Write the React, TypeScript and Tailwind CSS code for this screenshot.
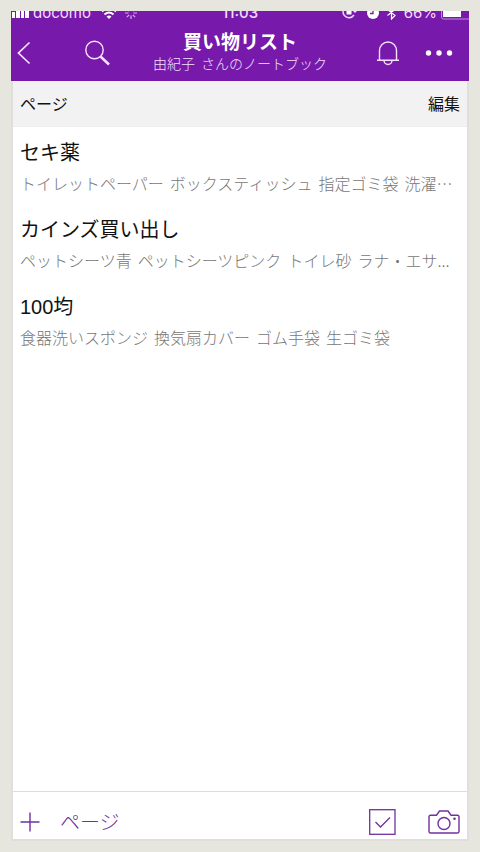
import React from "react";

type Page = { title: string; items: string[] };

const pages: Page[] = [
  {
    title: "セキ薬",
    items: ["トイレットペーパー", "ボックスティッシュ", "指定ゴミ袋", "洗濯…"],
  },
  {
    title: "カインズ買い出し",
    items: ["ペットシーツ青", "ペットシーツピンク", "トイレ砂", "ラナ・エサ..."],
  },
  {
    title: "100均",
    items: ["食器洗いスポンジ", "換気扇カバー", "ゴム手袋", "生ゴミ袋"],
  },
];

function StatusBar() {
  return (
    <div className="flex h-[9px] items-end font-['Inter','Liberation_Sans',sans-serif] text-[15px] leading-[15px] text-[#f3dcff]">
      <div className="flex flex-1 items-end">
        <svg className="mb-0.5" width="18" height="12" viewBox="0 0 18 12" fill="#fff">
          <rect x="1" y="6" width="3" height="6" />
          <rect x="5" y="4" width="4" height="8" />
          <rect x="10" y="2" width="3" height="10" />
          <rect x="14" y="0" width="4" height="12" />
        </svg>
        <span className="ml-1">docomo</span>
        <svg className="mb-px ml-2.5" width="16" height="12" viewBox="0 0 16 12" fill="none" stroke="#fff" strokeWidth="2">
          <path d="M1 4.500Q8-1.500 15 4.500M3.500 7.500Q8 3.500 12.500 7.500" />
          <path d="M5.500 9.500Q8 7.500 10.500 9.500L8 12Z" fill="#fff" stroke="none" />
        </svg>
        <svg className="mb-px ml-2" width="12" height="12" viewBox="0 0 12 12" fill="none" stroke="#d9b0ee" strokeWidth="1.200">
          <path d="M6 0v3.500M6 8.500V12M0 6h3.500M8.500 6H12M1.800 1.800l2.400 2.400M7.800 7.800l2.400 2.400M10.200 1.800L7.800 4.200M4.200 7.800l-2.400 2.400" />
        </svg>
      </div>
      <span className="font-medium">11:03</span>
      <div className="flex flex-1 items-end justify-end">
        <svg className="mb-px" width="15" height="14" viewBox="0 0 15 14" fill="none" stroke="#f3dcff" strokeWidth="1.500">
          <path d="M12 10A6 6 0 1 1 13 6M11 5l2 2 2-2" />
          <rect x="4.500" y="5.500" width="5" height="4" fill="#fff" stroke="none" />
        </svg>
        <svg className="mb-px ml-2.5" width="12" height="12" viewBox="0 0 12 12">
          <circle cx="6" cy="6" r="6" fill="#fff" />
          <path d="M6 2v4.500H3" fill="none" stroke="#7719aa" strokeWidth="1.300" />
        </svg>
        <svg className="ml-2" width="9" height="15" viewBox="0 0 9 15" fill="none" stroke="#fff" strokeWidth="1.200">
          <path d="M.5 4.500l7.500 6-3.500 3.500V1L8 4.500l-7.500 6" />
        </svg>
        <span className="ml-2">66%</span>
        <svg className="ml-1" width="28" height="14" viewBox="0 0 28 14">
          <rect x=".5" y=".5" width="30" height="12.500" rx="2" fill="none" stroke="#c08ddb" />
          <rect x="2" y="2" width="18" height="9" fill="#fff" />
        </svg>
      </div>
    </div>
  );
}

function Header() {
  return (
    <header className="overflow-hidden bg-[#7719aa] text-white">
      <StatusBar />
      <div className="grid h-[61px] grid-cols-[1fr_auto_1fr] items-center">
        <div className="flex items-center pt-1 pl-1.5">
          <button aria-label="戻る" className="w-[68px]">
            <svg width="14" height="24" viewBox="0 0 14 24" fill="none" stroke="#f8e4ff" strokeWidth="1.700">
              <path d="M12.500 1.500L1.500 12l11 10.500" />
            </svg>
          </button>
          <button aria-label="検索">
            <svg width="26" height="26" viewBox="0 0 26 26" fill="none" stroke="#f8e4ff">
              <circle cx="9.500" cy="10" r="8.700" strokeWidth="1.400" />
              <path d="M15.500 16.500L24 24.500" strokeWidth="2.500" />
            </svg>
          </button>
        </div>
        <div className="text-center whitespace-nowrap">
          <h1 className="text-[19px] leading-6 font-bold">買い物リスト</h1>
          <p className="text-sm leading-5 font-light whitespace-pre text-[#f4e0fd]">由紀子  さんのノートブック</p>
        </div>
        <div className="flex items-center justify-end gap-6 pt-1 pr-[15px]">
          <button aria-label="通知">
            <svg width="24" height="26" viewBox="0 0 24 26" fill="none" stroke="#f8e4ff" strokeWidth="1.400">
              <path d="M1 20.300h22M3.500 20V10.500a8.500 8.500 0 0 1 17 0V20M8 20.500a4 4 0 0 0 8 0" />
            </svg>
          </button>
          <button aria-label="その他">
            <svg width="30" height="26" viewBox="0 0 30 26" fill="#fff">
              <circle cx="4.500" cy="13" r="2.700" />
              <circle cx="15" cy="13" r="2.700" />
              <circle cx="25.500" cy="13" r="2.700" />
            </svg>
          </button>
        </div>
      </div>
    </header>
  );
}

export default function App() {
  return (
    <div className="flex min-h-screen bg-[#e6e6df] p-[11px] font-['Noto_Sans_CJK_JP',sans-serif] text-[#111]">
      <div className="flex flex-1 flex-col">
        <Header />
        <div className="flex flex-1 flex-col border-x-2 border-b-2 border-[#dfdfde] bg-white">
          <div className="flex h-[46px] items-center justify-between border-b border-[#eeeeee] bg-[#f2f2f2] px-[7px] pb-0.5 text-base leading-6">
            <h2>ページ</h2>
            <button>編集</button>
          </div>
          <ul className="flex flex-1 flex-col gap-[21px] px-[7px] pt-3">
            {pages.map((page) => (
              <li key={page.title}>
                <h3 className="font-['Liberation_Sans','Noto_Sans_CJK_JP',sans-serif] text-xl leading-7">{page.title}</h3>
                <p className="mt-1 flex gap-1.5 text-base leading-6 font-light whitespace-nowrap text-[#777]">
                  {page.items.map((item) => (
                    <span key={item}>{item}</span>
                  ))}
                </p>
              </li>
            ))}
          </ul>
          <footer className="flex h-12 items-center justify-between border-t border-[#dcdcdc] px-[7px] pt-3 text-[#7030a0]">
            <button className="flex items-center gap-5 text-xl leading-7 font-light">
              <svg width="20" height="20" viewBox="0 0 20 20" fill="none" stroke="currentColor" strokeWidth="1.400">
                <path d="M10 .5v19M.5 10h19" />
              </svg>
              ページ
            </button>
            <div className="flex items-center gap-8">
              <button aria-label="チェックリスト">
                <svg width="27" height="26" viewBox="0 0 27 26" fill="none" stroke="currentColor" strokeWidth="1.300">
                  <rect x=".7" y=".7" width="25.300" height="24.600" />
                  <path d="M6.500 13l5 5L21 8.500" />
                </svg>
              </button>
              <button aria-label="カメラ">
                <svg width="32" height="24" viewBox="0 0 32 24" fill="none" stroke="currentColor" strokeWidth="1.400">
                  <path d="M2.500 5.200H8.500L11.500 1h8.500l3 4.200h6.500a1.500 1.500 0 0 1 1.500 1.500v14.800a1.500 1.500 0 0 1-1.500 1.500h-27A1.500 1.500 0 0 1 1 21.500V6.700a1.500 1.500 0 0 1 1.500-1.500z" />
                  <circle cx="16" cy="13.500" r="6" />
                  <circle cx="26.500" cy="8.800" r="1.300" fill="currentColor" stroke="none" />
                </svg>
              </button>
            </div>
          </footer>
        </div>
      </div>
    </div>
  );
}
